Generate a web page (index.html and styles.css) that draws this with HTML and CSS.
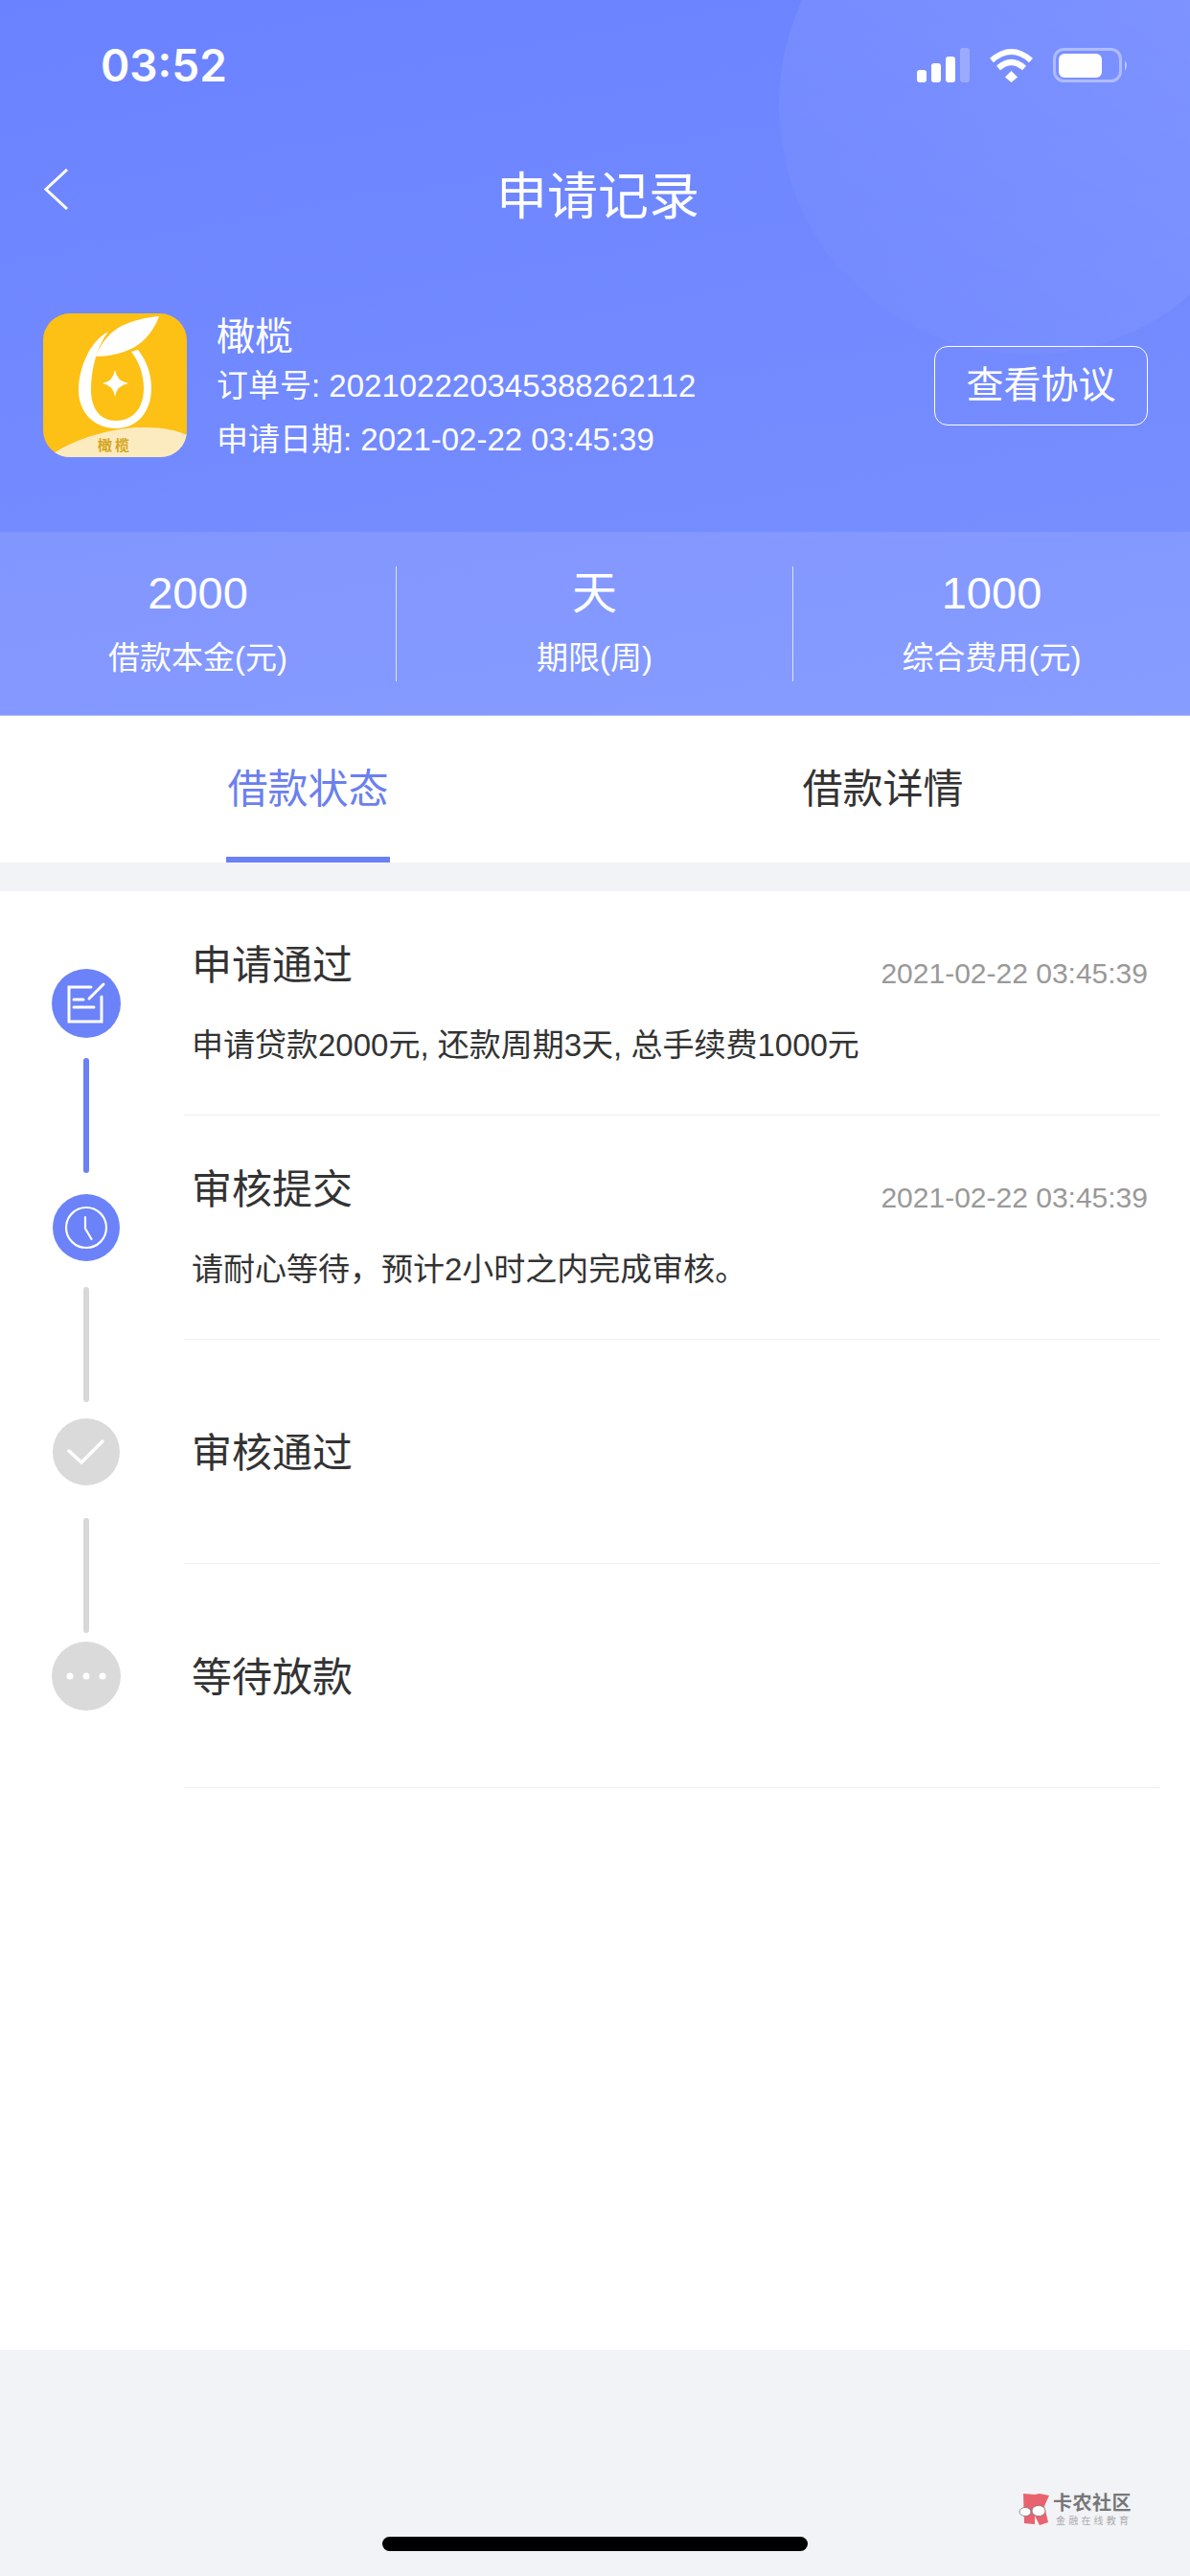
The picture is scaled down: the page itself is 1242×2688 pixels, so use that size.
FILE: index.html
```html
<!DOCTYPE html>
<html>
<head>
	<meta charset="utf-8">
	<title>申请记录</title>
	<link rel="stylesheet" href="styles.css">
</head>
<body>
	<div class="page">
		<div class="head">
			<div class="bubble"></div>
			<div class="status">
				<span class="time">03:52</span>
				<div class="status-icons">
					<svg width="55" height="36" viewBox="0 0 55 36">
						<rect x="0" y="23" width="10" height="13" rx="3" fill="#fff"/>
						<rect x="15" y="16" width="10" height="20" rx="3" fill="#fff"/>
						<rect x="30" y="9" width="10" height="27" rx="3" fill="#fff"/>
						<rect x="45" y="0" width="10" height="36" rx="3" fill="#fff" fill-opacity=".25"/>
					</svg>
					<svg width="47" height="36" viewBox="0 0 47 36" fill="none" stroke="#fff" stroke-width="6">
						<path d="M3 13 Q23.500 -5 44 13"/>
						<path d="M10 21 Q23.500 9 37 21"/>
						<polygon points="23.500,24 30,30.500 23.500,36 17,30.500" fill="#fff" stroke="none"/>
					</svg>
					<svg width="79" height="36" viewBox="0 0 79 36">
						<rect x="1.500" y="1.500" width="69" height="33" rx="10" fill="none" stroke="#fff" stroke-opacity=".4" stroke-width="3"/>
						<rect x="6" y="6" width="45" height="25" rx="6" fill="#fff"/>
						<path d="M75 13 Q79 18 75 24 Z" fill="#fff" fill-opacity=".5"/>
					</svg>
				</div>
			</div>
			<div class="nav">
				<svg class="back" width="25" height="43" viewBox="0 0 25 43" fill="none" stroke="#fff" stroke-width="3">
					<path d="M24 1 L2 21.500 L24 42"/>
				</svg>
				<div class="nav-title">申请记录</div>
			</div>
			<div class="info">
				<svg class="logo" width="150" height="150" viewBox="0 0 150 150">
					<rect width="150" height="150" rx="28" fill="#fdc014"/>
					<path d="M12 145 C45 125 85 118 108 119 C125 119 140 122 150 127 L150 122 C150 138 138 150 122 150 L28 150 C22 150 16 148 12 145 Z" fill="#fdebc0"/>
					<path d="M68 19 C47 30 37 60 37 80 C37 105 55 120 76 120 C98 120 113 103 113 78 C113 62 107 48 99 38 L92 40 C100 50 105 64 105 78 C105 100 93 112 76 112 C60 112 50 100 50 80 C50 62 54 38 68 19 Z" fill="#fff"/>
					<path d="M55 45 C60 30 72 18 82 13 C95 7 108 4 121 3 C117 15 108 28 94 36 C82 42 68 45 55 45 Z" fill="#fff"/>
					<path d="M75 59 Q77 71 89 73 Q77 75 75 87 Q73 75 62 73 Q73 71 75 59 Z" fill="#fff"/>
					<text x="75" y="143" class="logo-text">橄榄</text>
				</svg>
				<div class="info-text">
					<div class="app-name">橄榄</div>
					<div class="order">订单号: 202102220345388262112</div>
					<div class="apply-date">申请日期: 2021-02-22 03:45:39</div>
				</div>
				<div class="agree-btn">查看协议</div>
			</div>
			<div class="stats">
				<div class="stat">
					<div class="stat-num">2000</div>
					<div class="stat-label">借款本金(元)</div>
				</div>
				<div class="stat">
					<div class="stat-num">天</div>
					<div class="stat-label">期限(周)</div>
				</div>
				<div class="stat">
					<div class="stat-num">1000</div>
					<div class="stat-label">综合费用(元)</div>
				</div>
			</div>
		</div>

		<div class="tabs">
			<div class="tab active">借款状态</div>
			<div class="tab">借款详情</div>
		</div>

		<div class="steps">
			<div class="rail">
				<div class="dot dot-blue dot-big">
					<svg width="72" height="72" viewBox="0 0 72 72" fill="none" stroke="#fff" stroke-width="3" stroke-linecap="round">
						<path d="M41 19 L18 19 L18 55 L52 55 L52 29"/>
						<path d="M39 31 L54 16"/>
						<path d="M23 32 L33 32"/>
						<path d="M23 40 L44 40"/>
					</svg>
				</div>
				<div class="line line-blue line-one"></div>
				<div class="dot dot-blue">
					<svg width="70" height="70" viewBox="0 0 70 70" fill="none" stroke="#fff" stroke-width="2.200" stroke-linecap="round" stroke-linejoin="round">
						<circle cx="35" cy="35" r="21"/>
						<path d="M34 24 L34 36 L40.500 47"/>
					</svg>
				</div>
				<div class="line line-two"></div>
				<div class="dot">
					<svg width="70" height="70" viewBox="0 0 70 70" fill="none" stroke="#fff" stroke-width="3.500" stroke-linecap="round">
						<path d="M17 34 L30 46 L52 24"/>
					</svg>
				</div>
				<div class="line line-three"></div>
				<div class="dot dot-big">
					<svg width="72" height="72" viewBox="0 0 72 72" fill="#fff">
						<circle cx="19" cy="36" r="3.500"/>
						<circle cx="36" cy="36" r="3.500"/>
						<circle cx="53" cy="36" r="3.500"/>
					</svg>
				</div>
			</div>
			<div class="rows">
				<div class="row">
					<div class="row-top">
						<div class="row-title">申请通过</div>
						<div class="row-time">2021-02-22 03:45:39</div>
					</div>
					<div class="row-desc">申请贷款2000元, 还款周期3天, 总手续费1000元</div>
				</div>
				<div class="row">
					<div class="row-top">
						<div class="row-title">审核提交</div>
						<div class="row-time">2021-02-22 03:45:39</div>
					</div>
					<div class="row-desc">请耐心等待，预计2小时之内完成审核。</div>
				</div>
				<div class="row">
					<div class="row-top">
						<div class="row-title">审核通过</div>
					</div>
				</div>
				<div class="row">
					<div class="row-top">
						<div class="row-title">等待放款</div>
					</div>
				</div>
			</div>
		</div>

		<div class="mark">
			<svg width="33" height="36" viewBox="0 0 33 36">
				<polygon points="5,1 17,2 22,1 32,3 27,14 31,31 22,34 17,24 17,33 6,32" fill="#e8636f"/>
				<ellipse cx="7" cy="20" rx="6" ry="4.500" fill="#fff" stroke="#777" stroke-width=".8"/>
				<ellipse cx="21" cy="19" rx="7" ry="5.500" fill="#fff" stroke="#777" stroke-width=".8"/>
			</svg>
			<div>
				<div class="mark-name">卡农社区</div>
				<div class="mark-sub">金融在线教育</div>
			</div>
		</div>
		<div class="home-bar"></div>
	</div>
</body>
</html>
```

FILE: styles.css
```css
*{
	box-sizing: border-box;
}
body{
	margin: 0;
	background: #f2f3f7;
	font-family: "Liberation Sans", "Noto Sans CJK SC", sans-serif;
	color: #333;
}
.page{
	position: relative;
	width: 1242px;
	height: 2688px;
	overflow: hidden;
}

/* top blue part */
.head{
	position: relative;
	height: 747px;
	overflow: hidden;
	color: #fff;
	background: linear-gradient(170deg, #6a82ff, #7a91ff);
	border-bottom: 1px solid #a9b6f5;
}
.bubble{
	position: absolute;
	left: 813px;
	top: -150px;
	width: 520px;
	height: 520px;
	border-radius: 50%;
	background: linear-gradient(30deg, rgba(255,255,255,0), rgba(255,255,255,.14));
}
.status{
	position: relative;
	display: flex;
	justify-content: space-between;
	align-items: center;
	height: 135px;
	padding: 0 64px 0 105px;
}
.time{
	font-family: "Inter", sans-serif;
	font-size: 46px;
	font-weight: 600;
}
.status-icons{
	display: flex;
	gap: 20px;
}
.nav{
	position: relative;
	display: grid;
	grid-template-columns: 1fr auto 1fr;
	align-items: center;
	height: 138px;
	padding: 0 40px 0 46px;
}
.back{
	margin-bottom: 13px;
}
.nav-title{
	margin-top: 3px;
	font-size: 53px;
	line-height: 60px;
}
.info{
	position: relative;
	display: flex;
	align-items: center;
	height: 282px;
	padding: 54px 44px 78px 45px;
}
.logo-text{
	font-size: 15px;
	font-weight: bold;
	fill: #d4a51a;
	text-anchor: middle;
	letter-spacing: 3px;
}
.info-text{
	margin: 5px 0 0 31px;
	font-size: 33px;
	line-height: 46px;
}
.app-name{
	font-size: 40px;
}
.order{
	margin-top: 6px;
}
.apply-date{
	margin-top: 10px;
}
.agree-btn{
	width: 223px;
	height: 83px;
	margin-left: auto;
	border: 1px solid #fff;
	border-radius: 14px;
	font-size: 39px;
	line-height: 80px;
	text-align: center;
}
.stats{
	position: relative;
	display: grid;
	grid-template-columns: repeat(3, 1fr);
	height: 192px;
	padding-top: 36px;
	background: rgba(255,255,255,.1);
}
.stat{
	height: 120px;
	text-align: center;
	border-right: 1px solid rgba(255,255,255,.7);
}
.stat:last-child{
	border-right: none;
}
.stat-num{
	font-size: 47px;
	line-height: 56px;
}
.stat-label{
	margin-top: 17px;
	font-size: 33px;
	line-height: 46px;
}

/* tabs */
.tabs{
	display: flex;
	gap: 429px;
	height: 153px;
	padding-left: 236px;
	background: #fff;
}
.tab{
	width: 171px;
	height: 153px;
	padding-top: 54px;
	font-size: 42px;
	line-height: 46px;
	text-align: center;
	border-bottom: 6px solid transparent;
}
.tab.active{
	color: #6b80ee;
	border-bottom-color: #6b80f4;
}

/* status list */
.steps{
	display: flex;
	height: 1522px;
	margin-top: 30px;
	background: #fff;
}
.rail{
	display: flex;
	flex-direction: column;
	align-items: center;
	flex: none;
	width: 180px;
	padding-top: 81px;
	margin-right: 12px;
}
.dot{
	display: flex;
	flex: none;
	width: 70px;
	height: 70px;
	border-radius: 50%;
	background: #dadada;
}
.dot-big{
	width: 72px;
	height: 72px;
}
.dot-blue{
	background: #6b82f8;
}
.line{
	flex: none;
	width: 6px;
	height: 120px;
	border-radius: 3px;
	background: #d8d8d8;
}
.line-blue{
	background: #6b80f4;
}
.line-one{
	margin: 21px 0 22px;
}
.line-two{
	margin: 27px 0 17px;
}
.line-three{
	margin: 34px 0 9px;
}
.rows{
	flex: none;
	width: 1019px;
}
.row{
	display: flex;
	flex-direction: column;
	justify-content: center;
	height: 234px;
	padding: 5px 13px 0 8px;
	border-bottom: 1px solid #eeeeef;
}
.row-top{
	display: flex;
	justify-content: space-between;
	align-items: center;
	height: 46px;
}
.row-title{
	font-size: 42px;
	line-height: 46px;
}
.row-time{
	margin-top: 16px;
	font-size: 30px;
	color: #999;
}
.row-desc{
	margin-top: 37px;
	font-size: 33px;
	line-height: 46px;
}

/* watermark + home bar sit on top of the page */
.mark{
	position: absolute;
	left: 1063px;
	top: 2601px;
	display: flex;
	gap: 3px;
}
.mark-name{
	font-size: 20px;
	line-height: 22px;
	font-weight: bold;
	letter-spacing: .5px;
	color: #777;
}
.mark-sub{
	margin-top: 1px;
	padding-left: 3px;
	font-size: 10px;
	line-height: 13px;
	letter-spacing: 3.200px;
	color: #aaa;
}
.home-bar{
	position: absolute;
	left: 399px;
	top: 2647px;
	width: 444px;
	height: 15px;
	border-radius: 8px;
	background: #000;
}
```
